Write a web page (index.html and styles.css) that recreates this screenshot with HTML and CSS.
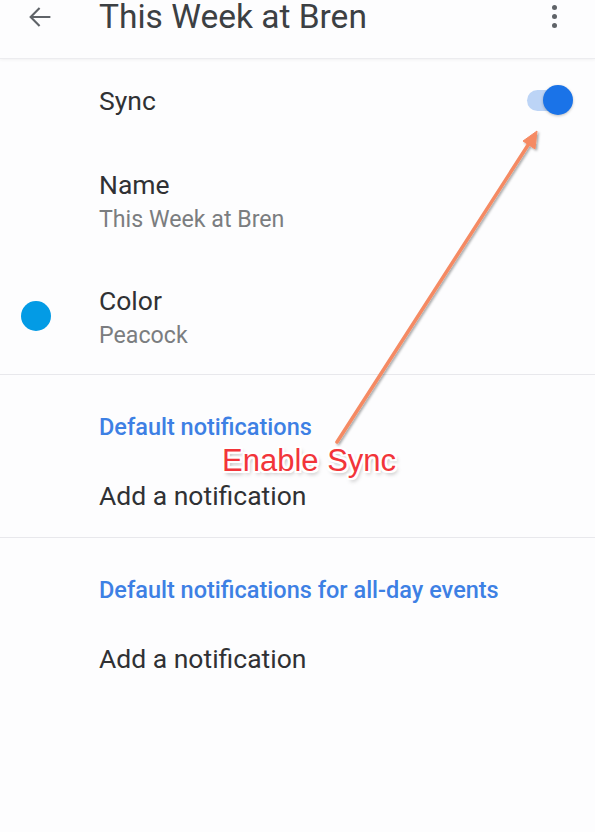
FILE: index.html
```html
<!DOCTYPE html>
<html>
<head>
    <link rel="stylesheet" href="styles.css">
</head>
<body>
    <div class="screen">
        <div class="app-bar">
            <button class="icon-button back-button">
                <svg class="back-icon" viewBox="0 0 24 24" fill="none" stroke="currentColor">
                    <path d="M20 12H4.5M11 5l-7 7 7 7" stroke-width="1.8" stroke-linecap="square"/>
                </svg>
            </button>
            <h1 class="title">This Week at Bren</h1>
            <button class="icon-button menu-button">
                <span class="dot"></span>
                <span class="dot"></span>
                <span class="dot"></span>
            </button>
        </div>

        <div class="row sync-row">
            <div class="row-text">
                <div class="primary">Sync</div>
            </div>
            <div class="switch">
                <div class="switch-track"></div>
                <div class="switch-thumb"></div>
            </div>
        </div>

        <div class="row two-line">
            <div class="row-text">
                <div class="primary">Name</div>
                <div class="secondary">This Week at Bren</div>
            </div>
        </div>

        <div class="row two-line">
            <div class="row-lead">
                <span class="color-dot"></span>
            </div>
            <div class="row-text">
                <div class="primary">Color</div>
                <div class="secondary">Peacock</div>
            </div>
        </div>

        <div class="section">
            <div class="section-title">Default notifications</div>
            <div class="primary">Add a notification</div>
        </div>

        <div class="section">
            <div class="section-title">Default notifications for all-day events</div>
            <div class="primary">Add a notification</div>
        </div>

        <!-- annotation drawn over the screenshot -->
        <svg class="callout-arrow" viewBox="0 0 595 832">
            <defs>
                <filter id="arrowShadow" x="-20%" y="-20%" width="140%" height="140%">
                    <feDropShadow dx="1.5" dy="1.5" stdDeviation="1.2" flood-color="#000" flood-opacity="0.35"/>
                </filter>
            </defs>
            <g filter="url(#arrowShadow)" fill="#f58a63" stroke="#f58a63">
                <line x1="337" y1="442" x2="530" y2="142" stroke-width="3.5" stroke-linecap="round"/>
                <path d="M537 131 L535 149 L523 141 Z" stroke-width="1" stroke-linejoin="round"/>
            </g>
        </svg>
        <div class="callout-label">Enable Sync</div>
    </div>
</body>
</html>
```

FILE: styles.css
```css
body {
    margin: 0;
    background: #fdfdfe;
    font-family: Roboto, 'Noto Sans', sans-serif;
    color: #303134;
}

.screen {
    position: relative;
    width: 595px;
    height: 832px;
    overflow: hidden;
}

.app-bar {
    display: flex;
    align-items: center;
    height: 34px;
    padding-bottom: 24px;
    border-bottom: 1px solid #ececef;
    box-shadow: 0 1px 3px rgba(0, 0, 0, 0.05);
}

.icon-button {
    border: none;
    background: transparent;
    padding: 0;
    cursor: pointer;
    color: #5f6368;
}

.back-button {
    width: 99px;
    height: 34px;
    display: flex;
    align-items: center;
    padding-left: 26px;
    box-sizing: border-box;
}

.back-icon {
    width: 28px;
    height: 28px;
}

.title {
    flex: 1;
    margin: 0;
    font-size: 33.5px;
    font-weight: 400;
    line-height: 34px;
    color: #3c4043;
}

.menu-button {
    width: 56px;
    height: 34px;
    display: flex;
    flex-direction: column;
    align-items: center;
    justify-content: center;
    gap: 4px;
    padding-right: 26px;
    box-sizing: border-box;
    margin-top: -2px;
}

.dot {
    width: 5px;
    height: 5px;
    border-radius: 50%;
    background: #5f6368;
}

.row {
    display: flex;
    align-items: center;
    padding-left: 99px;
    padding-right: 22px;
    box-sizing: border-box;
}

.sync-row {
    height: 83px;
    padding-top: 1px;
}

.two-line {
    height: 116px;
    padding-top: 4px;
}

.row-text {
    flex: 1;
    display: flex;
    flex-direction: column;
}

.row-lead {
    width: 99px;
    margin-left: -99px;
    display: flex;
    justify-content: center;
    padding-right: 27px;
    box-sizing: border-box;
}

.primary {
    font-size: 26.5px;
    line-height: 34px;
    color: #303134;
}

.secondary {
    font-size: 23.2px;
    line-height: 34px;
    color: #7b7d80;
}

.color-dot {
    width: 30px;
    height: 30px;
    border-radius: 50%;
    background: #039be5;
    margin-top: -4px;
}

.switch {
    position: relative;
    width: 48px;
    height: 30px;
    margin-top: -2px;
}

.switch-track {
    position: absolute;
    left: 2px;
    top: 5px;
    width: 36px;
    height: 21px;
    border-radius: 11px;
    background: #bcd4f6;
}

.switch-thumb {
    position: absolute;
    right: 0;
    top: 0;
    width: 30px;
    height: 30px;
    border-radius: 50%;
    background: #1a73e8;
    box-shadow: 0 1px 3px rgba(0, 0, 0, 0.25);
}

.section {
    display: flex;
    flex-direction: column;
    gap: 41px;
    padding: 38px 22px 27px 99px;
    border-top: 1px solid #e8e8ec;
}

.section-title {
    font-size: 23.5px;
    font-weight: 500;
    line-height: 28px;
    color: #3d80e4;
}

.section .primary {
    line-height: 28px;
}

.callout-arrow {
    position: absolute;
    left: 0;
    top: 0;
    width: 595px;
    height: 832px;
    pointer-events: none;
}

.callout-label {
    position: absolute;
    left: 222px;
    top: 443px;
    font-family: 'Liberation Sans', Arial, sans-serif;
    font-size: 31px;
    line-height: 36px;
    color: #f2353a;
    text-shadow:
        -2px 0 0 #fff, 2px 0 0 #fff, 0 -2px 0 #fff, 0 2px 0 #fff,
        -2px -2px 0 #fff, 2px 2px 0 #fff, -2px 2px 0 #fff, 2px -2px 0 #fff,
        2px 3px 4px rgba(0, 0, 0, 0.35);
}
```
